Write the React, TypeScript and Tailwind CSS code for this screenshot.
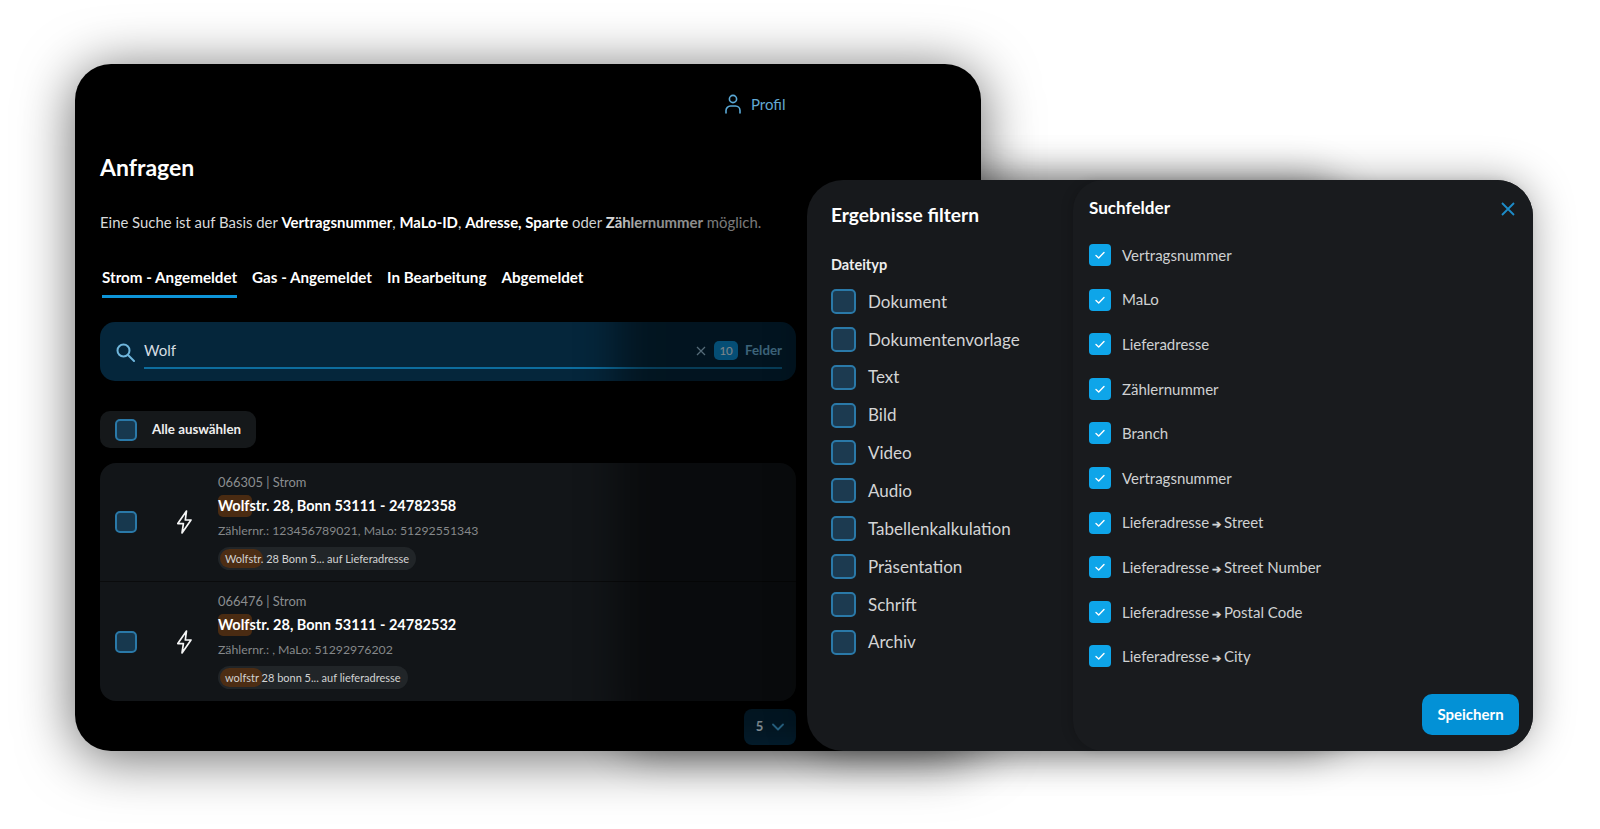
import React from "react";

const font = { fontFamily: '"Lato","Noto Sans",sans-serif' };

function Box({ big = false }: { big?: boolean }) {
  return (
    <span
      className={
        big
          ? "block w-[25px] h-[25px] shrink-0 rounded-[5px] border-2 border-[#2a79a8] bg-[#1c3a50]"
          : "block w-[22px] h-[22px] shrink-0 rounded-[5px] border-2 border-[#2a79a8] bg-[#17384e]"
      }
    />
  );
}

function Checked({ label }: { label: React.ReactNode }) {
  return (
    <div className="flex items-center h-[22px] gap-[11px]">
      <span className="flex items-center justify-center w-[22px] h-[22px] rounded-[4px] bg-[#0ea5e9]">
        <svg width="12" height="12" viewBox="0 0 12 12" fill="none" stroke="#fff" strokeWidth="1.4" strokeLinecap="round" strokeLinejoin="round">
          <path d="M2 6.5 4.7 9 10 3.4" />
        </svg>
      </span>
      <span className="text-[15px] text-[#cfd1d2]">{label}</span>
    </div>
  );
}

function Row({ id, addr, meter, pillHead, pillTail, divider }: { id: string; addr: string; meter: string; pillHead: string; pillTail: string; divider?: boolean }) {
  return (
    <div className={divider ? "relative flex h-[119px] border-b border-[#0a0b0c]" : "relative flex h-[119px]"}>
      <div className="flex items-center pl-[15px] w-[118px] shrink-0">
        <Box />
        <svg className="ml-[39px]" width="17" height="24" viewBox="0 0 17 24" fill="none" stroke="#f4f5f5" strokeWidth="1.7" strokeLinejoin="round">
          <path d="M10.5 1 1.8 13.6h5.6L6 23l9-13H9.3z" />
        </svg>
      </div>
      <div className="flex flex-col pt-[11px]">
        <div className="h-[16px] leading-[16px] text-[12.9px] text-[#8b8e90]">{id}</div>
        <div className="relative mt-[5px] h-[22px] leading-[22px] text-[14.5px] font-bold text-white">
          <span className="absolute left-0 top-0 w-[34px] h-[22px] rounded-[5px] bg-[#4a2b12]" />
          <span className="relative">{addr}</span>
        </div>
        <div className="mt-[6px] h-[16px] leading-[16px] text-[12.3px] text-[#85888a]">{meter}</div>
        <div className="relative mt-[8px] self-start h-[23px] leading-[23px] rounded-full bg-[#212528] px-[7px] text-[11px] text-[#d2d3d3]">
          <span className="absolute left-[2px] top-[2px] w-[43px] h-[19px] rounded-full bg-[#4c2d14]" />
          <span className="relative">{pillHead}</span>
          <span className="relative">{pillTail}</span>
        </div>
      </div>
    </div>
  );
}

const types = ["Dokument", "Dokumentenvorlage", "Text", "Bild", "Video", "Audio", "Tabellenkalkulation", "Präsentation", "Schrift", "Archiv"];

const arrow = <span className="text-[11px] font-bold -mx-[1px]">➔</span>;
const fields: React.ReactNode[] = [
  "Vertragsnummer",
  "MaLo",
  "Lieferadresse",
  "Zählernummer",
  "Branch",
  "Vertragsnummer",
  <>Lieferadresse {arrow} Street</>,
  <>Lieferadresse {arrow} Street Number</>,
  <>Lieferadresse {arrow} Postal Code</>,
  <>Lieferadresse {arrow} City</>,
];

export default function App() {
  return (
    <div className="relative w-[1600px] h-[829px] overflow-hidden bg-white" style={font}>
      {/* back window */}
      <div className="absolute left-[75px] top-[64px] w-[906px] h-[687px] rounded-[36px] bg-black shadow-[0_6px_55px_rgba(0,0,0,0.6)] pl-[25px] text-white">
        <div className="w-[696px]">
          <div className="flex items-center h-[80px] pl-[632px]">
            <div className="flex items-center gap-[9px] text-[15px] text-[#62a9d3]">
              <svg width="18" height="20" viewBox="0 0 18 20" fill="none" stroke="#5aa9d6" strokeWidth="1.6" strokeLinecap="round" className="-ml-[8px]">
                <circle cx="9" cy="5" r="3.6" />
                <path d="M2 19v-2.5A4.5 4.5 0 0 1 6.5 12h5a4.5 4.5 0 0 1 4.5 4.5V19" />
              </svg>
              Profil
            </div>
          </div>
          <h1 className="mt-[8px] text-[23px] leading-[30px] font-bold">Anfragen</h1>
          <p className="mt-[29px] text-[14.9px] leading-[22px] text-[#d9dadb]">
            Eine Suche ist auf Basis der <b className="text-white">Vertragsnummer</b>, <b className="text-white">MaLo-ID</b>, <b className="text-white">Adresse, Sparte</b> oder <b className="text-white">Zählernummer</b> möglich.
          </p>
          <div className="flex gap-[15px] mt-[33px] pl-[2px] text-[15.2px] font-bold leading-[22px]">
            <div className="h-[32px] border-b-[3px] border-[#0d94d8]">Strom - Angemeldet</div>
            <div>Gas - Angemeldet</div>
            <div>In Bearbeitung</div>
            <div>Abgemeldet</div>
          </div>
          <div className="flex items-start h-[59px] mt-[24px] rounded-[15px] bg-[#05263b] pl-[16px] pr-[14px] pt-[18px]">
            <svg width="19" height="19" viewBox="0 0 19 19" fill="none" stroke="#6fb6dc" strokeWidth="2" strokeLinecap="round" className="mt-[3px] shrink-0">
              <circle cx="7.5" cy="7.5" r="6" />
              <path d="m12 12 6 6" />
            </svg>
            <div className="flex items-center flex-1 h-[29px] ml-[9px] border-b-2 border-[#0d6d9e] pb-[6px]">
              <span className="flex-1 text-[15px] text-[#d6dde2]">Wolf</span>
              <svg width="10" height="10" viewBox="0 0 10 10" stroke="#9cc4dc" strokeWidth="1.2" fill="none">
                <path d="m1 1 8 8M9 1l-8 8" />
              </svg>
              <span className="flex items-center justify-center w-[24px] h-[19px] ml-[8px] rounded-[5px] bg-[#0a8fd6] text-[11.5px] text-white/90">10</span>
              <span className="ml-[7px] text-[13.3px] font-bold text-[#6db4dc]">Felder</span>
            </div>
          </div>
          <div className="flex items-center gap-[15px] w-[156px] h-[37px] mt-[30px] rounded-[10px] bg-[#15181a] pl-[15px] text-[13.3px] font-bold text-[#eeeeee]">
            <Box />
            Alle auswählen
          </div>
          <div className="mt-[15px] h-[238px] rounded-[16px] bg-[#121518] overflow-hidden">
            <Row id="066305 | Strom" addr="Wolfstr. 28, Bonn 53111 - 24782358" meter="Zählernr.: 123456789021, MaLo: 51292551343" pillHead="Wolfstr." pillTail=" 28 Bonn 5... auf Lieferadresse" divider />
            <Row id="066476 | Strom" addr="Wolfstr. 28, Bonn 53111 - 24782532" meter="Zählernr.: , MaLo: 51292976202" pillHead="wolfstr" pillTail=" 28 bonn 5... auf lieferadresse" />
          </div>
          <div className="flex justify-end mt-[8px]">
            <div className="flex items-center justify-center gap-[9px] w-[52px] h-[36px] rounded-[8px] bg-[#05263b] text-[13px] font-bold text-[#cfe0ea]">
              5
              <svg width="12" height="8" viewBox="0 0 12 8" fill="none" stroke="#3f9fd2" strokeWidth="1.8" strokeLinecap="round" strokeLinejoin="round">
                <path d="m1 1.5 5 5 5-5" />
              </svg>
            </div>
          </div>
        </div>
      </div>

      {/* front window */}
      <div className="absolute left-[807px] top-[180px] w-[726px] h-[571px] flex rounded-[36px] bg-[#17191c] shadow-[0_0_40px_rgba(0,0,0,0.35),-190px_0_40px_rgba(0,0,0,0.45)] text-white">
        <div className="w-[266px] shrink-0 pl-[24px] pt-[22px]">
          <div className="text-[19.2px] leading-[26px] font-bold">Ergebnisse filtern</div>
          <div className="mt-[28px] text-[14.5px] leading-[18px] font-bold text-[#eeeeee]">Dateityp</div>
          <div className="mt-[15px] flex flex-col gap-[12.85px]">
            {types.map((t) => (
              <div key={t} className="flex items-center gap-[12px] h-[25px]">
                <Box big />
                <span className="text-[17px] text-[#d3d4d5]">{t}</span>
              </div>
            ))}
          </div>
        </div>
        <div className="relative flex-1 rounded-r-[36px] rounded-l-[30px] bg-[#191b1e] pl-[16px] pt-[16px] shadow-[-4px_0_10px_rgba(0,0,0,0.12)]">
          <div className="text-[17.1px] leading-[24px] font-bold">Suchfelder</div>
          <svg className="absolute right-[18px] top-[22px]" width="14" height="14" viewBox="0 0 14 14" fill="none" stroke="#1d8cc8" strokeWidth="1.8">
            <path d="m1 1 12 12M13 1 1 13" />
          </svg>
          <div className="mt-[24px] flex flex-col gap-[22.6px]">
            {fields.map((f, i) => (
              <Checked key={i} label={f} />
            ))}
          </div>
          <div className="absolute right-[14px] bottom-[16px] flex items-center justify-center w-[97px] h-[41px] rounded-[10px] bg-[#0391d6] text-[15px] font-bold text-white">Speichern</div>
        </div>
      </div>
    </div>
  );
}
